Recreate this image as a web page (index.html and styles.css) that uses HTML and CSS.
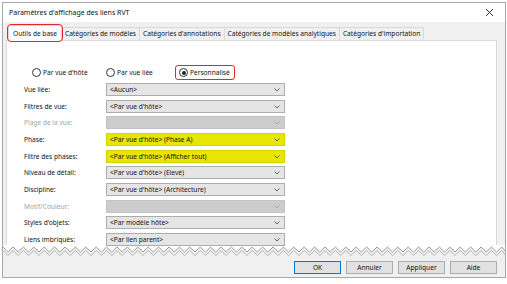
FILE: index.html
```html
<!DOCTYPE html>
<html lang="fr">
<head>
    <meta charset="UTF-8">
    <title>Paramètres d'affichage des liens RVT</title>
    <link rel="stylesheet" href="styles.css">
</head>
<body>
    <div class="window">
        <div class="titlebar">
            <span class="title">Paramètres d'affichage des liens RVT</span>
            <svg class="close" width="9" height="9" viewBox="0 0 9 9"><path d="M1 1L8 8M8 1L1 8" stroke="#333" stroke-width="1" fill="none"/></svg>
        </div>
        <div class="tabs">
            <div class="tab active">Outils de base</div>
            <div class="tab">Catégories de modèles</div>
            <div class="tab">Catégories d'annotations</div>
            <div class="tab">Catégories de modèles analytiques</div>
            <div class="tab">Catégories d'importation</div>
        </div>
        <div class="panel">
            <div class="radios">
                <div class="radio r1"><span class="dot"></span>Par vue d'hôte</div>
                <div class="radio r2"><span class="dot"></span>Par vue liée</div>
                <div class="radio r3 marked"><span class="dot on"></span>Personnalisé</div>
            </div>
            <div class="form">
                <label>Vue liée:</label>
                <div class="select">&lt;Aucun&gt;<svg class="chev" width="6" height="4" viewBox="0 0 6 4"><path d="M0.5 0.5L3 3L5.5 0.5" stroke="#666" fill="none"/></svg></div>
                <label>Filtres de vue:</label>
                <div class="select">&lt;Par vue d'hôte&gt;<svg class="chev" width="6" height="4" viewBox="0 0 6 4"><path d="M0.5 0.5L3 3L5.5 0.5" stroke="#666" fill="none"/></svg></div>
                <label class="off">Plage de la vue:</label>
                <div class="select disabled"><svg class="chev" width="6" height="4" viewBox="0 0 6 4"><path d="M0.5 0.5L3 3L5.5 0.5" stroke="#aaa" fill="none"/></svg></div>
                <label>Phase:</label>
                <div class="select yellow">&lt;Par vue d'hôte&gt; (Phase A)<svg class="chev" width="6" height="4" viewBox="0 0 6 4"><path d="M0.5 0.5L3 3L5.5 0.5" stroke="#666" fill="none"/></svg></div>
                <label>Filtre des phases:</label>
                <div class="select yellow">&lt;Par vue d'hôte&gt; (Afficher tout)<svg class="chev" width="6" height="4" viewBox="0 0 6 4"><path d="M0.5 0.5L3 3L5.5 0.5" stroke="#666" fill="none"/></svg></div>
                <label>Niveau de détail:</label>
                <div class="select">&lt;Par vue d'hôte&gt; (Elevé)<svg class="chev" width="6" height="4" viewBox="0 0 6 4"><path d="M0.5 0.5L3 3L5.5 0.5" stroke="#666" fill="none"/></svg></div>
                <label>Discipline:</label>
                <div class="select">&lt;Par vue d'hôte&gt; (Architecture)<svg class="chev" width="6" height="4" viewBox="0 0 6 4"><path d="M0.5 0.5L3 3L5.5 0.5" stroke="#666" fill="none"/></svg></div>
                <label class="off">Motif/Couleur:</label>
                <div class="select disabled"><svg class="chev" width="6" height="4" viewBox="0 0 6 4"><path d="M0.5 0.5L3 3L5.5 0.5" stroke="#aaa" fill="none"/></svg></div>
                <label>Styles d'objets:</label>
                <div class="select">&lt;Par modèle hôte&gt;<svg class="chev" width="6" height="4" viewBox="0 0 6 4"><path d="M0.5 0.5L3 3L5.5 0.5" stroke="#666" fill="none"/></svg></div>
                <label>Liens imbriqués:</label>
                <div class="select">&lt;Par lien parent&gt;<svg class="chev" width="6" height="4" viewBox="0 0 6 4"><path d="M0.5 0.5L3 3L5.5 0.5" stroke="#666" fill="none"/></svg></div>
            </div>
        </div>
        <svg class="tear" width="503" height="12" viewBox="0 0 503 12" preserveAspectRatio="none">
            <path d="M0 0 L503 0 L503 7 L498.8 2 L493.6 7 L488.4 2 L483.2 7 L478 2 L472.8 7 L467.6 2 L462.4 7 L457.2 2 L452 7 L446.8 2 L441.6 7 L436.4 2 L431.2 7 L426 2 L420.8 7 L415.6 2 L410.4 7 L405.2 2 L400 7 L394.8 2 L389.6 7 L384.4 2 L379.2 7 L374 2 L368.8 7 L363.6 2 L358.4 7 L353.2 2 L348 7 L342.8 2 L337.6 7 L332.4 2 L327.2 7 L322 2 L316.8 7 L311.6 2 L306.4 7 L301.2 2 L296 7 L290.8 2 L285.6 7 L280.4 2 L275.2 7 L270 2 L264.8 7 L259.6 2 L254.4 7 L249.2 2 L244 7 L238.8 2 L233.6 7 L228.4 2 L223.2 7 L218 2 L212.8 7 L207.6 2 L202.4 7 L197.2 2 L192 7 L186.8 2 L181.6 7 L176.4 2 L171.2 7 L166 2 L160.8 7 L155.6 2 L150.4 7 L145.2 2 L140 7 L134.8 2 L129.6 7 L124.4 2 L119.2 7 L114 2 L108.8 7 L103.6 2 L98.4 7 L93.2 2 L88 7 L82.8 2 L77.6 7 L72.4 2 L67.2 7 L62 2 L56.8 7 L51.6 2 L46.4 7 L41.2 2 L36 7 L30.8 2 L25.6 7 L20.4 2 L15.2 7 L10 2 L4.8 7 L0 2 Z" fill="#fff"/>
            <polyline points="0,2 4.8,7 10,2 15.2,7 20.4,2 25.6,7 30.8,2 36,7 41.2,2 46.4,7 51.6,2 56.8,7 62,2 67.2,7 72.4,2 77.6,7 82.8,2 88,7 93.2,2 98.4,7 103.6,2 108.8,7 114,2 119.2,7 124.4,2 129.6,7 134.8,2 140,7 145.2,2 150.4,7 155.6,2 160.8,7 166,2 171.2,7 176.4,2 181.6,7 186.8,2 192,7 197.2,2 202.4,7 207.6,2 212.8,7 218,2 223.2,7 228.4,2 233.6,7 238.8,2 244,7 249.2,2 254.4,7 259.6,2 264.8,7 270,2 275.2,7 280.4,2 285.6,7 290.8,2 296,7 301.2,2 306.4,7 311.6,2 316.8,7 322,2 327.2,7 332.4,2 337.6,7 342.8,2 348,7 353.2,2 358.4,7 363.6,2 368.8,7 374,2 379.2,7 384.4,2 389.6,7 394.8,2 400,7 405.2,2 410.4,7 415.6,2 420.8,7 426,2 431.2,7 436.4,2 441.6,7 446.8,2 452,7 457.2,2 462.4,7 467.6,2 472.8,7 478,2 483.2,7 488.4,2 493.6,7 498.8,2 503,7" fill="none" stroke="#9a9a9a" stroke-width="1"/>
            <polyline transform="translate(0,3.5)" points="0,2 4.8,7 10,2 15.2,7 20.4,2 25.6,7 30.8,2 36,7 41.2,2 46.4,7 51.6,2 56.8,7 62,2 67.2,7 72.4,2 77.6,7 82.8,2 88,7 93.2,2 98.4,7 103.6,2 108.8,7 114,2 119.2,7 124.4,2 129.6,7 134.8,2 140,7 145.2,2 150.4,7 155.6,2 160.8,7 166,2 171.2,7 176.4,2 181.6,7 186.8,2 192,7 197.2,2 202.4,7 207.6,2 212.8,7 218,2 223.2,7 228.4,2 233.6,7 238.8,2 244,7 249.2,2 254.4,7 259.6,2 264.8,7 270,2 275.2,7 280.4,2 285.6,7 290.8,2 296,7 301.2,2 306.4,7 311.6,2 316.8,7 322,2 327.2,7 332.4,2 337.6,7 342.8,2 348,7 353.2,2 358.4,7 363.6,2 368.8,7 374,2 379.2,7 384.4,2 389.6,7 394.8,2 400,7 405.2,2 410.4,7 415.6,2 420.8,7 426,2 431.2,7 436.4,2 441.6,7 446.8,2 452,7 457.2,2 462.4,7 467.6,2 472.8,7 478,2 483.2,7 488.4,2 493.6,7 498.8,2 503,7" fill="none" stroke="#b4b4b4" stroke-width="1"/>
        </svg>
        <div class="buttons">
            <div class="btn default">OK</div>
            <div class="btn">Annuler</div>
            <div class="btn">Appliquer</div>
            <div class="btn">Aide</div>
        </div>
    </div>
</body>
</html>
```

FILE: styles.css
```css
body{
    margin: 0;
    padding: 0;
    background: #fff;
    font-family: "Noto Sans", "Open Sans", sans-serif;
    font-size: 6.6px;
    color: #111;
}
.window{
    margin: 2px 0 0 2px;
    width: 502px;
    height: 274px;
    border: 1px solid #a8a8a8;
    background: #f0f0f0;
    display: flex;
    flex-direction: column;
    overflow: hidden;
}
.window > *{
    flex-shrink: 0;
}
.titlebar{
    height: 19px;
    background: #fff;
    display: flex;
    align-items: center;
    justify-content: space-between;
    padding: 0 11px 0 6px;
    font-size: 7px;
    color: #111;
}
.tabs{
    display: flex;
    align-items: flex-end;
    height: 18px;
    padding-left: 5px;
}
.tab{
    height: 12px;
    line-height: 12px;
    padding: 0 3px;
    border: 1px solid #d9d9d9;
    border-bottom: none;
    margin-left: -1px;
    background: #f0f0f0;
    white-space: nowrap;
}
.tab.active{
    height: 15px;
    line-height: 15px;
    background: #fff;
    padding: 0 4px;
    margin-left: 0;
    margin-bottom: -1px;
    position: relative;
    z-index: 1;
    outline: 1.5px solid #e3262c;
    border-radius: 3px;
}
.panel{
    margin: 0 8px 0 3px;
    background: #fff;
    border: 1px solid #d9d9d9;
    border-bottom: none;
    height: 182px;
    padding: 25px 0 0 17px;
}
.radios{
    display: flex;
    align-items: center;
    height: 13px;
    padding-left: 8px;
}
.radio{
    display: flex;
    align-items: center;
    gap: 2px;
}
.r1{
    width: 74px;
}
.r2{
    width: 69px;
}
.r3.marked{
    border: 1.5px solid #e3262c;
    border-radius: 3px;
    padding: 2px 4px 2px 3px;
}
.dot{
    width: 7px;
    height: 7px;
    border: 1px solid #333;
    border-radius: 50%;
    background: #fff;
    display: flex;
    align-items: center;
    justify-content: center;
}
.dot.on::after{
    content: "";
    width: 4px;
    height: 4px;
    border-radius: 50%;
    background: #222;
}
.form{
    display: grid;
    grid-template-columns: 82px 179px;
    grid-auto-rows: 16.7px;
    align-items: center;
    margin-top: 2px;
}
label.off{
    color: #a3a3a3;
}
.select{
    height: 11px;
    line-height: 11px;
    border: 1px solid #adadad;
    background: #e5e5e5;
    padding-left: 3px;
    display: flex;
    align-items: center;
    position: relative;
}
.select.disabled{
    background: #cccccc;
    border-color: #c4c4c4;
}
.select.yellow{
    background: #e6e600;
    border-color: #d4d400;
}
.chev{
    position: absolute;
    right: 4px;
    top: 4px;
}
.tear{
    display: block;
    margin-top: -3px;
}
.buttons{
    display: flex;
    justify-content: flex-end;
    gap: 5px;
    padding: 4px 8px 0 0;
}
.btn{
    width: 45px;
    height: 11px;
    line-height: 11px;
    text-align: center;
    background: #e1e1e1;
    border: 1px solid #adadad;
}
.btn.default{
    border-color: #0078d7;
}
```
